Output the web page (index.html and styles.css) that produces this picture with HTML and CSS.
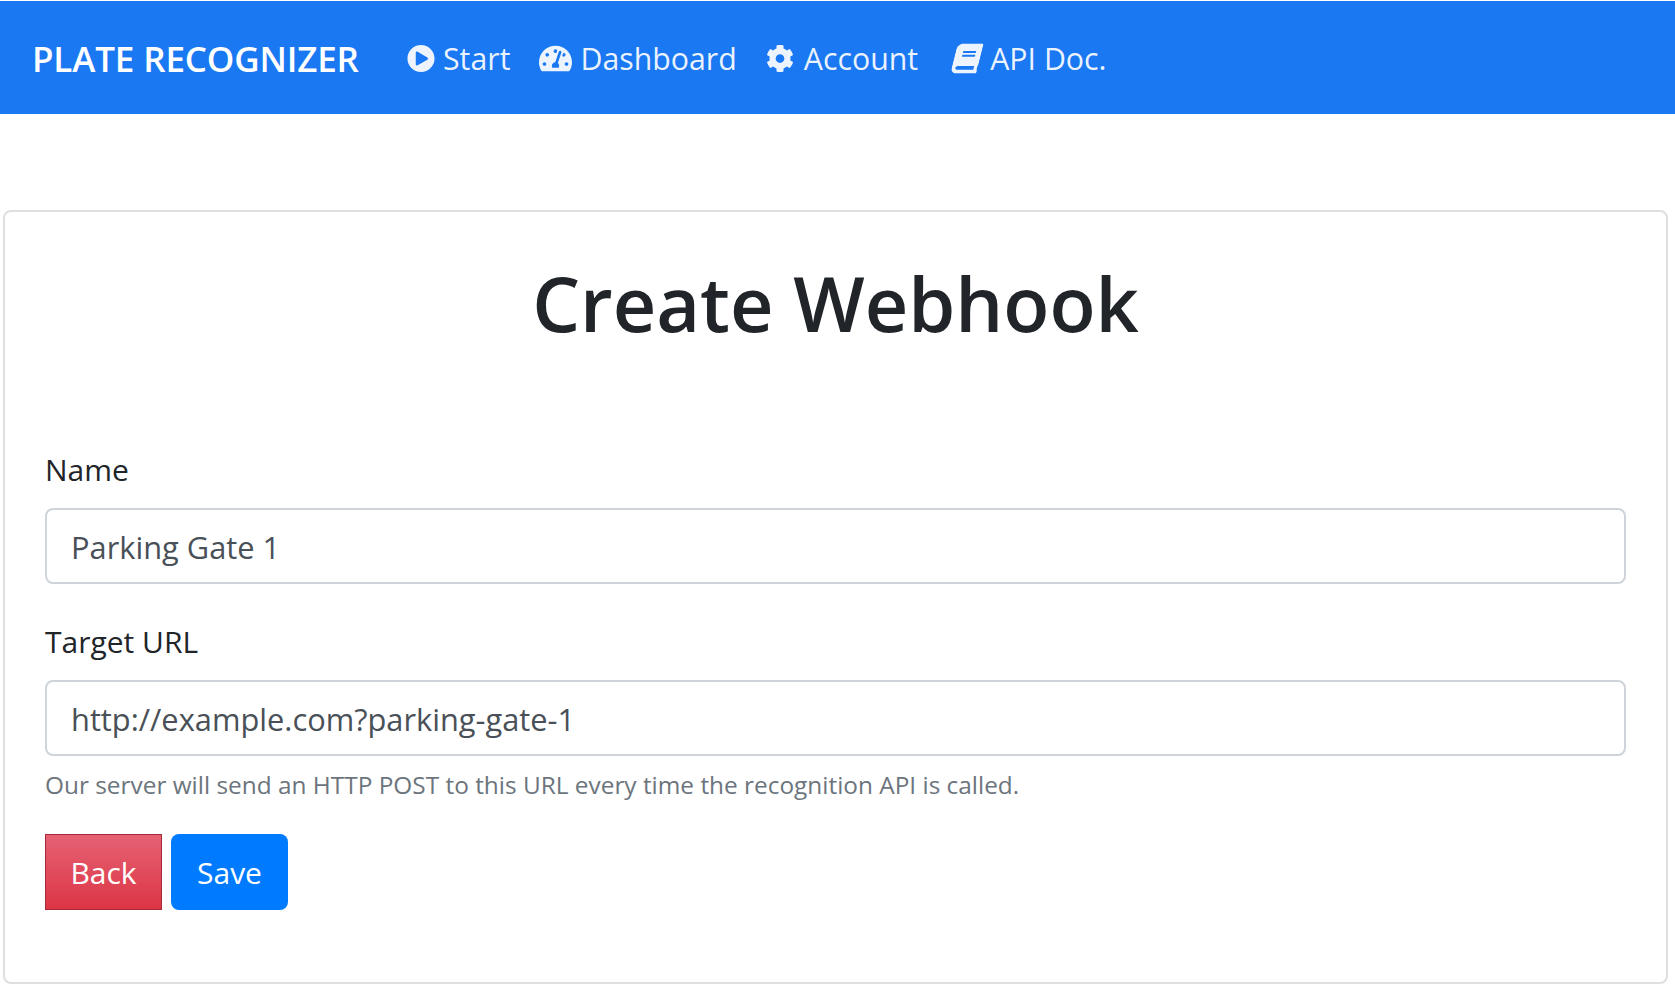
FILE: index.html
```html
<!DOCTYPE html>
<html lang="en">
<head>
<meta charset="utf-8">
<title>Create Webhook</title>
<link rel="stylesheet" href="styles.css">
</head>
<body>
<nav class="navbar">
  <a class="brand" href="#">PLATE RECOGNIZER</a>
  <ul class="nav">
    <li><a class="nav-link" href="#"><svg class="icon icon-start" viewBox="0 0 512 512"><path d="M256 8C119 8 8 119 8 256s111 248 248 248 248-111 248-248S393 8 256 8zm115.7 272l-176 101c-15.8 8.8-35.7-2.5-35.7-21V152c0-18.4 19.8-29.8 35.7-21l176 107c16.4 9.2 16.4 32.9 0 42z"/></svg>Start</a></li>
    <li><a class="nav-link" href="#"><svg class="icon icon-dash" viewBox="0 0 576 512"><path d="M288 32C128.94 32 0 160.94 0 320c0 52.8 14.25 102.26 39.06 144.8 5.61 9.62 16.3 15.2 27.44 15.2h443c11.14 0 21.83-5.58 27.44-15.2C561.75 422.26 576 372.8 576 320c0-159.06-128.94-288-288-288zm0 64c14.71 0 26.58 10.13 30.32 23.65-1.11 2.26-2.64 4.23-3.45 6.67l-9.22 27.67c-5.13 3.49-10.97 6.01-17.64 6.01-17.67 0-32-14.33-32-32S270.33 96 288 96zM96 384c-17.67 0-32-14.33-32-32s14.33-32 32-32 32 14.33 32 32-14.33 32-32 32zm48-160c-17.67 0-32-14.33-32-32s14.33-32 32-32 32 14.33 32 32-14.33 32-32 32zm246.77-72.41l-61.33 184C343.13 347.33 352 364.54 352 384c0 11.72-3.38 22.55-8.88 32H232.88c-5.5-9.45-8.88-20.28-8.88-32 0-33.94 26.5-61.43 59.9-63.59l61.34-184.01c4.17-12.56 17.73-19.45 30.36-15.17 12.57 4.19 19.35 17.79 15.17 30.36zm14.66 57.2l15.52-46.55c3.47-1.29 7.13-2.23 11.05-2.23 17.67 0 32 14.33 32 32s-14.33 32-32 32c-11.38-.01-20.89-6.28-26.57-15.22zM480 384c-17.67 0-32-14.33-32-32s14.33-32 32-32 32 14.33 32 32-14.33 32-32 32z"/></svg>Dashboard</a></li>
    <li><a class="nav-link" href="#"><svg class="icon icon-cog" viewBox="0 0 512 512"><path d="M487.4 315.7l-42.6-24.6c4.3-23.2 4.3-47 0-70.2l42.6-24.6c4.9-2.8 7.1-8.6 5.5-14-11.1-35.6-30-67.8-54.7-94.6-3.8-4.1-10-5.1-14.8-2.3L380.8 110c-17.9-15.4-38.5-27.3-60.8-35.1V25.8c0-5.6-3.9-10.5-9.4-11.7-36.7-8.2-74.3-7.8-109.2 0-5.5 1.2-9.4 6.1-9.4 11.7V75c-22.2 7.9-42.8 19.8-60.8 35.1L88.7 85.5c-4.9-2.8-11-1.9-14.8 2.3-24.7 26.7-43.6 58.9-54.7 94.6-1.7 5.4.6 11.2 5.5 14L67.3 221c-4.3 23.2-4.3 47 0 70.2l-42.6 24.6c-4.9 2.8-7.1 8.6-5.5 14 11.1 35.6 30 67.8 54.7 94.6 3.8 4.1 10 5.1 14.8 2.3l42.6-24.6c17.9 15.4 38.5 27.3 60.8 35.1v49.2c0 5.6 3.9 10.5 9.4 11.7 36.7 8.2 74.3 7.8 109.2 0 5.5-1.2 9.4-6.1 9.4-11.7v-49.2c22.2-7.9 42.8-19.8 60.8-35.1l42.6 24.6c4.9 2.8 11 1.9 14.8-2.3 24.7-26.7 43.6-58.9 54.7-94.6 1.5-5.5-.7-11.3-5.6-14.1zM256 336c-44.1 0-80-35.9-80-80s35.9-80 80-80 80 35.9 80 80-35.9 80-80 80z"/></svg>Account</a></li>
    <li><a class="nav-link" href="#"><svg class="icon icon-book" viewBox="0 0 448 512"><path d="M448 360V24c0-13.3-10.7-24-24-24H96C43 0 0 43 0 96v320c0 53 43 96 96 96h328c13.3 0 24-10.7 24-24v-16c0-7.5-3.5-14.3-8.9-18.7-4.2-15.4-4.2-59.3 0-74.7 5.4-4.3 8.9-11.1 8.9-18.6zM128 134c0-3.3 2.7-6 6-6h212c3.3 0 6 2.7 6 6v20c0 3.3-2.7 6-6 6H134c-3.3 0-6-2.7-6-6v-20zm0 64c0-3.3 2.7-6 6-6h212c3.3 0 6 2.7 6 6v20c0 3.3-2.7 6-6 6H134c-3.3 0-6-2.7-6-6v-20zm253.4 250H96c-17.7 0-32-14.3-32-32 0-17.6 14.4-32 32-32h285.4c-1.9 17.1-1.9 46.9 0 64z"/></svg>API Doc.</a></li>
  </ul>
</nav>
<main class="page">
  <section class="card">
    <h1 class="title">Create Webhook</h1>
    <form class="form">
      <div class="group">
        <label class="label" for="name">Name</label>
        <input class="control" id="name" type="text" value="Parking Gate 1">
      </div>
      <div class="group">
        <label class="label" for="url">Target URL</label>
        <input class="control" id="url" type="text" value="http://example.com?parking-gate-1">
        <small class="help">Our server will send an HTTP POST to this URL every time the recognition API is called.</small>
      </div>
      <div class="actions">
        <a class="btn btn-back" href="#">Back</a>
        <button class="btn btn-save" type="button">Save</button>
      </div>
    </form>
  </section>
</main>
</body>
</html>
```
FILE: styles.css
```css
* { box-sizing: border-box; }

html, body { height: 100%; }

body {
  margin: 0;
  padding-top: 1px;
  background: #fff;
  color: #212529;
  font-family: "Open Sans", "Noto Sans", "Liberation Sans", sans-serif;
  font-size: 30px;
  overflow: hidden;
}

.navbar {
  display: flex;
  align-items: center;
  height: 113px;
  padding: 2px 32px 0;
  background: #1a78f2;
}

.brand {
  width: 327px;
  color: #fff;
  font-size: 35px;
  font-weight: 600;
  letter-spacing: -0.15px;
  text-decoration: none;
  white-space: nowrap;
}

.nav {
  display: flex;
  gap: 29px;
  margin: 0 0 0 48px;
  padding: 0;
  list-style: none;
}

.nav-link {
  display: flex;
  align-items: center;
  color: rgba(255, 255, 255, 0.92);
  font-size: 30.3px;
  text-decoration: none;
  white-space: nowrap;
}

.icon {
  flex: none;
  height: 31px;
  margin-right: 8px;
  fill: currentColor;
}

.icon-start { width: 28px; }
.icon-dash { width: 33px; }
.icon-cog { width: 28px; margin-right: 10px; }
.icon-book { width: 26px; margin: 0 10px 0 7px; transform: skewX(-14deg); }

.page { padding: 96px 7px 0 3px; }

.card {
  height: 774px;
  padding: 0 40px;
  border: 2px solid #dfdfdf;
  border-radius: 8px;
}

.title {
  height: 223px;
  margin: 0;
  padding-top: 41px;
  color: #212529;
  font-size: 75.6px;
  font-weight: 600;
  line-height: 100px;
  text-align: center;
}

.form { display: flex; flex-direction: column; }

.group { margin-bottom: 23px; }

.label {
  display: block;
  height: 73px;
  padding-top: 13px;
  line-height: 44px;
}

.control {
  display: block;
  width: 100%;
  height: 76px;
  padding: 2px 24px 0;
  border: 2px solid #ced4da;
  border-radius: 8px;
  color: #495057;
  font: inherit;
  font-size: 30.8px;
  outline: none;
}

.help {
  display: block;
  margin-top: 11px;
  color: #6c757d;
  font-size: 24.4px;
  line-height: 36px;
}

.actions { display: flex; gap: 9px; margin-top: 8px; }

.btn {
  display: flex;
  align-items: center;
  justify-content: center;
  width: 117px;
  height: 76px;
  color: #fff;
  font: inherit;
  text-decoration: none;
}

.btn-back {
  border: 1px solid #a52a3a;
  background: linear-gradient(#e56274, #dc3545);
}

.btn-save {
  border: 0;
  border-radius: 8px;
  background: #007bff;
}
```
